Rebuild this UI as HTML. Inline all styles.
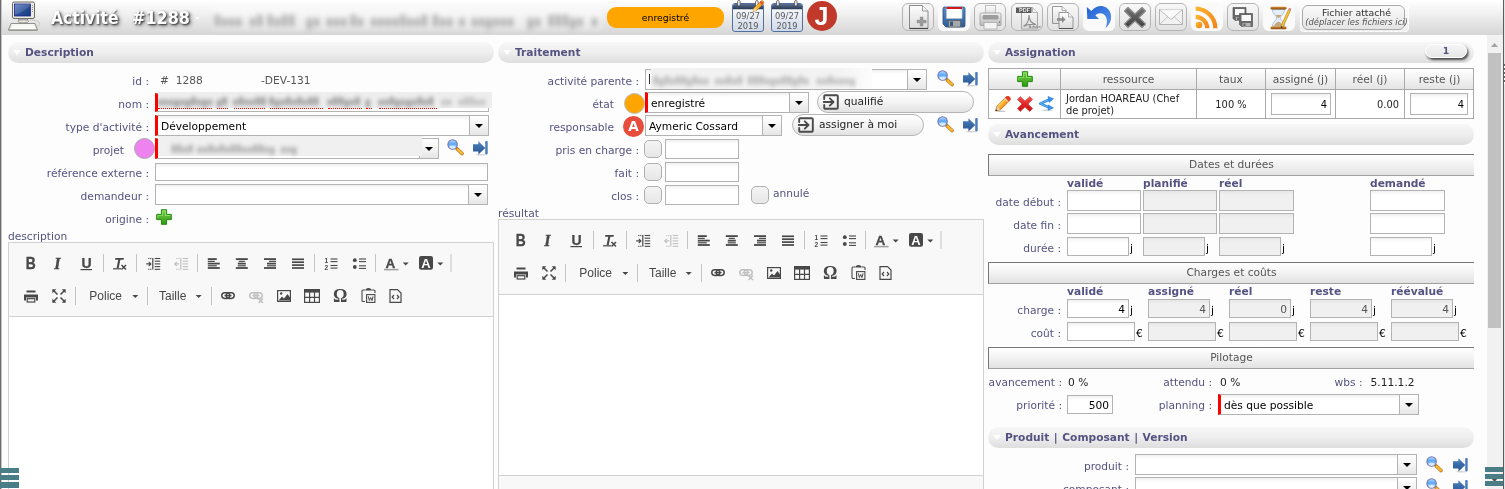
<!DOCTYPE html>
<html lang="fr"><head><meta charset="utf-8"><title>Activité #1288</title>
<style>
*{box-sizing:border-box;margin:0;padding:0}
html,body{width:1505px;height:489px;overflow:hidden;background:#fdfdfd}
body{position:relative;font-family:"DejaVu Sans","Liberation Sans",sans-serif;font-size:8pt;color:#000}
.a{position:absolute;white-space:nowrap}
.lbl{position:absolute;left:0;text-align:right;color:#545381;line-height:14px;height:14px;white-space:nowrap}
.txt{position:absolute;line-height:14px;height:14px;white-space:nowrap;color:#555}
.sec{position:absolute;height:21px;border-radius:10.5px;background:linear-gradient(#f7f7f7,#eeeeee 50%,#dedede);color:#545381;font-weight:bold;line-height:22px;padding-left:17px;white-space:nowrap;word-spacing:.8px}
.sec:before{content:"";position:absolute;left:4.5px;top:8px;border:4px solid transparent;border-top:5px solid #fff;border-bottom:0}
.inp{position:absolute;border:1px solid #b3b3b3;background:linear-gradient(#f0f0f0,#fff 4px,#fff);line-height:14px;white-space:nowrap;overflow:hidden;color:#000;padding:3px 3px 0 3px}
.inp.ro{background:linear-gradient(#e6e6e6,#f0f0f0 4px,#f0f0f0);color:#555}
.inp.r{text-align:right}
.inp.red{border-left:3px solid #f00}
.sel{position:absolute;border:1px solid #b3b3b3;background:linear-gradient(#f0f0f0,#fff 4px,#fff);line-height:14px;white-space:nowrap;overflow:hidden;color:#000;padding:4px 3px 0 3px}
.sel.red{border-left:3px solid #f00}
.sel i{position:absolute;right:0;top:0;bottom:0;width:19px;border-left:1px solid #b3b3b3;background:linear-gradient(#fff,#f4f4f4 50%,#e6e6e6)}
.sel i:after{content:"";position:absolute;left:5px;top:8px;border:4px solid transparent;border-top:4px solid #000;border-bottom:0}
.bar{position:absolute;height:22px;border:1px solid #a0a0a0;border-right:0;border-top-color:#777;border-left-color:#777;background:linear-gradient(#fff,#f2f2f2 50%,#e2e2e2);text-align:center;color:#555;line-height:20px}
.colh{position:absolute;color:#545381;font-weight:bold;line-height:14px;white-space:nowrap}
.chk{position:absolute;width:18px;height:18px;margin-left:-1px;border:1px solid #b0b0b0;border-radius:5px;background:linear-gradient(#f4f4f4,#e6e6e6)}
</style></head>
<body>
<div id="root" style="position:absolute;left:0;top:0;width:1505px;height:489px;will-change:transform">

<svg width="0" height="0" style="position:absolute">
<defs>
<linearGradient id="lens" x1="0" y1="0" x2="0" y2="1"><stop offset="0" stop-color="#b8dcff"/><stop offset="0.45" stop-color="#5aa6f6"/><stop offset="0.75" stop-color="#9ccefc"/><stop offset="1" stop-color="#e4f4ff"/></linearGradient>
<linearGradient id="gdoc" x1="0" y1="0" x2="0" y2="1"><stop offset="0" stop-color="#fdfdfd"/><stop offset="1" stop-color="#dcdcdc"/></linearGradient>
<linearGradient id="ggrey" x1="0" y1="0" x2="0" y2="1"><stop offset="0" stop-color="#f2f2f2"/><stop offset="1" stop-color="#b8b8b8"/></linearGradient>
<linearGradient id="gblue" x1="0" y1="0" x2="0" y2="1"><stop offset="0" stop-color="#5b8cc4"/><stop offset="1" stop-color="#2f5f98"/></linearGradient>
<linearGradient id="garrow" x1="0" y1="0" x2="0" y2="1"><stop offset="0" stop-color="#4a7fc0"/><stop offset="1" stop-color="#2a5590"/></linearGradient>
<linearGradient id="gundo" x1="0" y1="0" x2="1" y2="1"><stop offset="0" stop-color="#1f60d0"/><stop offset="1" stop-color="#5a96f0"/></linearGradient>
<linearGradient id="gplus" x1="0" y1="0" x2="0" y2="1"><stop offset="0" stop-color="#7ad04a"/><stop offset="1" stop-color="#2f9a12"/></linearGradient>
<linearGradient id="gcal" x1="0" y1="0" x2="0" y2="1"><stop offset="0" stop-color="#ffffff"/><stop offset="0.3" stop-color="#f0f3f8"/><stop offset="1" stop-color="#cfd8e8"/></linearGradient>
<linearGradient id="gcalh" x1="0" y1="0" x2="0" y2="1"><stop offset="0" stop-color="#5c6f92"/><stop offset="1" stop-color="#283650"/></linearGradient>
<linearGradient id="grss" x1="0" y1="0" x2="1" y2="1"><stop offset="0" stop-color="#fdb62f"/><stop offset="1" stop-color="#f2821a"/></linearGradient>
<linearGradient id="gscreen" x1="0" y1="0" x2="1" y2="1"><stop offset="0" stop-color="#5a7fc0"/><stop offset="0.5" stop-color="#2a4f98"/><stop offset="1" stop-color="#16397a"/></linearGradient>
<linearGradient id="gpen2" x1="0" y1="0" x2="0" y2="1"><stop offset="0" stop-color="#ffd866"/><stop offset="0.5" stop-color="#fbb030"/><stop offset="1" stop-color="#f08c18"/></linearGradient>
<linearGradient id="gpen" x1="0" y1="0" x2="1" y2="0"><stop offset="0" stop-color="#ffd24a"/><stop offset="1" stop-color="#f08a1a"/></linearGradient>
<linearGradient id="gred" x1="0" y1="0" x2="0" y2="1"><stop offset="0" stop-color="#f25a5a"/><stop offset="0.5" stop-color="#e02626"/><stop offset="1" stop-color="#c81616"/></linearGradient>
<linearGradient id="gx" x1="0" y1="0" x2="0" y2="1"><stop offset="0" stop-color="#777"/><stop offset="1" stop-color="#3e3e3e"/></linearGradient>
<linearGradient id="gwood" x1="0" y1="0" x2="0" y2="1"><stop offset="0" stop-color="#d98a2a"/><stop offset="1" stop-color="#8a4a10"/></linearGradient>
</defs></svg>

<div class="a" style="left:0px;top:0px;width:2px;height:489px;background:linear-gradient(90deg,#6c6c6c 50%,#c4c4c4 50%)"></div>
<div class="a" style="left:2px;top:0px;width:1501px;height:35px;background:linear-gradient(#ffffff,#f0f0f0 40%,#d6d6d6)"></div>
<div class="a" style="left:8px;top:0.5px;width:32px;height:32px;"><svg width="32" height="32" viewBox="0 0 32 32" style="display:block;"><path d="M22 19c5 0 9 1 9.500 3.500c.3 1.500-1 2.500-2.500 3" fill="none" stroke="#c0c0b0" stroke-width="0.8"/><rect x="4.500" y="1" width="22" height="16.500" rx="1.500" fill="#ecece4" stroke="#6a6a66" stroke-width="1"/><rect x="6.500" y="3" width="16" height="12" fill="url(#gscreen)" stroke="#23238e" stroke-width="0.8"/><path d="M7 13.500c6-1 11-5 15.500-9.500v-1h-15.500z" fill="#fff" opacity="0.150"/><circle cx="24.500" cy="4.500" r=".5" fill="#777"/><circle cx="24.500" cy="6.500" r=".5" fill="#777"/><circle cx="24.500" cy="8.500" r=".5" fill="#777"/><circle cx="24.500" cy="10.500" r=".5" fill="#777"/><path d="M10.500 17.500h9.500c0 2-2 3-4.700 3s-4.800-1-4.800-3z" fill="#c8c8c0" stroke="#6a6a66" stroke-width="0.8"/><ellipse cx="15.300" cy="20.300" rx="5.500" ry="1.600" fill="#e4e4dc" stroke="#7a7a76" stroke-width="0.7"/><path d="M3 22.500h24l2.500 6.500h-29z" fill="#ecece4" stroke="#7a7a76" stroke-width="0.8" stroke-linejoin="round"/><path d="M4.500 24h21.500M3.800 25.700h23M3 27.400h24.500" stroke="#fff" stroke-width="1.100"/><path d="M0.500 29.300h29" stroke="#8a8a84" stroke-width="0.800"/></svg></div>
<div class="a" style="left:51px;top:7px;width:70px;height:22px;font-family:'DejaVu Sans Condensed','DejaVu Sans',sans-serif;font-weight:bold;font-size:17.3px;color:#fff;text-shadow:1px 1px 2px rgba(0,0,0,.75),2px 2px 4px rgba(0,0,0,.45);line-height:22px">Activité</div>
<div class="a" style="left:132px;top:7px;width:62px;height:22px;font-family:'DejaVu Sans Condensed','DejaVu Sans',sans-serif;font-weight:bold;font-size:17.8px;color:#fff;text-shadow:1px 1px 2px rgba(0,0,0,.75),2px 2px 4px rgba(0,0,0,.45);line-height:22px">#1288</div>
<div class="a" style="left:196px;top:17px;width:3px;height:2px;background:#fff;opacity:.8"></div>
<div class="a" style="left:212px;top:7px;width:390px;height:23px;background:rgba(255,255,255,.38);filter:blur(2px)"></div>
<svg class="a" width="1000" height="170" style="left:0;top:0;filter:blur(2.7px);overflow:visible" fill="rgba(70,70,70,.36)"><rect x="214.6" y="14.5" width="5.2" height="12.0" rx="1"/><rect x="221.8" y="18.0" width="5.2" height="8.5" rx="1"/><rect x="229.0" y="18.0" width="5.2" height="8.5" rx="1"/><rect x="236.2" y="18.0" width="5.2" height="8.5" rx="1"/><rect x="250.0" y="18.0" width="5.2" height="8.5" rx="1"/><rect x="257.2" y="14.5" width="5.2" height="12.0" rx="1"/><rect x="267.6" y="14.5" width="5.2" height="12.0" rx="1"/><rect x="274.8" y="18.0" width="5.2" height="8.5" rx="1"/><rect x="282.0" y="14.5" width="5.2" height="12.0" rx="1"/><rect x="289.2" y="14.5" width="5.2" height="12.0" rx="1"/><rect x="306.7" y="18.0" width="5.2" height="11.3" rx="1"/><rect x="313.9" y="18.0" width="5.2" height="8.5" rx="1"/><rect x="326.8" y="18.0" width="5.2" height="8.5" rx="1"/><rect x="334.0" y="18.0" width="5.2" height="8.5" rx="1"/><rect x="341.2" y="18.0" width="5.2" height="8.5" rx="1"/><rect x="350.5" y="14.5" width="5.2" height="12.0" rx="1"/><rect x="357.7" y="18.0" width="5.2" height="8.5" rx="1"/><rect x="371.4" y="18.0" width="5.2" height="8.5" rx="1"/><rect x="378.6" y="18.0" width="5.2" height="8.5" rx="1"/><rect x="385.8" y="18.0" width="5.2" height="8.5" rx="1"/><rect x="393.0" y="18.0" width="5.2" height="8.5" rx="1"/><rect x="400.2" y="14.5" width="5.2" height="12.0" rx="1"/><rect x="407.4" y="18.0" width="5.2" height="8.5" rx="1"/><rect x="414.6" y="18.0" width="5.2" height="8.5" rx="1"/><rect x="421.8" y="14.5" width="5.2" height="12.0" rx="1"/><rect x="432.8" y="14.5" width="5.2" height="12.0" rx="1"/><rect x="440.0" y="18.0" width="5.2" height="8.5" rx="1"/><rect x="447.2" y="18.0" width="5.2" height="8.5" rx="1"/><rect x="459.3" y="18.0" width="5.2" height="8.5" rx="1"/><rect x="471.9" y="18.0" width="5.2" height="8.5" rx="1"/><rect x="479.1" y="18.0" width="5.2" height="8.5" rx="1"/><rect x="486.3" y="18.0" width="5.2" height="11.3" rx="1"/><rect x="493.5" y="18.0" width="5.2" height="8.5" rx="1"/><rect x="500.7" y="18.0" width="5.2" height="8.5" rx="1"/><rect x="507.9" y="18.0" width="5.2" height="8.5" rx="1"/><rect x="527.7" y="18.0" width="5.2" height="11.3" rx="1"/><rect x="534.9" y="18.0" width="5.2" height="8.5" rx="1"/><rect x="548.6" y="14.5" width="5.2" height="12.0" rx="1"/><rect x="555.8" y="14.5" width="5.2" height="12.0" rx="1"/><rect x="563.0" y="14.5" width="5.2" height="12.0" rx="1"/><rect x="570.2" y="18.0" width="5.2" height="11.3" rx="1"/><rect x="577.4" y="18.0" width="5.2" height="8.5" rx="1"/><rect x="591.9" y="18.0" width="5.2" height="8.5" rx="1"/></svg>
<div class="a" style="left:607px;top:7px;width:117px;height:21px;background:#ffa500;border-radius:9px;text-align:center;font-size:7pt;line-height:21px;color:#000">enregistré</div>
<div class="a" style="left:732px;top:0px;width:33px;height:33px;"><svg width="33" height="33" viewBox="0 0 33 33" style="display:block;overflow:visible"><rect x="0.500" y="3.500" width="31" height="28" rx="2.500" fill="url(#gcal)" stroke="#52709e" stroke-width="1"/><path d="M1 9.300v-3.300a2 2 0 0 1 2-2h26a2 2 0 0 1 2 2v3.300z" fill="url(#gcalh)"/><rect x="5.600" y="0.500" width="2.500" height="5.500" rx="1.250" fill="#f8f8f8" stroke="#333" stroke-width="0.700"/><rect x="23.600" y="0.500" width="2.500" height="5.500" rx="1.250" fill="#f8f8f8" stroke="#333" stroke-width="0.700"/><text x="16" y="19.200" text-anchor="middle" font-family="DejaVu Sans,Liberation Sans,sans-serif" font-size="8.300" fill="#585858">09/27</text><text x="16" y="29.200" text-anchor="middle" font-family="DejaVu Sans,Liberation Sans,sans-serif" font-size="8.300" fill="#585858">2019</text><path d="M21 11.500l1-3.500 7-7a1.400 1.400 0 0 1 2 0l.5.500a1.400 1.400 0 0 1 0 2l-7 7z" fill="url(#gpen)" stroke="#c07a10" stroke-width="0.600"/><path d="M21 11.500l1-3.500 2.500 2.500z" fill="#f4d8a8"/><path d="M28.300 1.700l2.500 2.500" stroke="#e8483a" stroke-width="1.800"/></svg></div>
<div class="a" style="left:771px;top:0px;width:33px;height:33px;"><svg width="33" height="33" viewBox="0 0 33 33" style="display:block;overflow:visible"><rect x="0.500" y="3.500" width="31" height="28" rx="2.500" fill="url(#gcal)" stroke="#52709e" stroke-width="1"/><path d="M1 9.300v-3.300a2 2 0 0 1 2-2h26a2 2 0 0 1 2 2v3.300z" fill="url(#gcalh)"/><rect x="5.600" y="0.500" width="2.500" height="5.500" rx="1.250" fill="#f8f8f8" stroke="#333" stroke-width="0.700"/><rect x="23.600" y="0.500" width="2.500" height="5.500" rx="1.250" fill="#f8f8f8" stroke="#333" stroke-width="0.700"/><text x="16" y="19.200" text-anchor="middle" font-family="DejaVu Sans,Liberation Sans,sans-serif" font-size="8.300" fill="#585858">09/27</text><text x="16" y="29.200" text-anchor="middle" font-family="DejaVu Sans,Liberation Sans,sans-serif" font-size="8.300" fill="#585858">2019</text></svg></div>
<div class="a" style="left:807px;top:1px;width:30px;height:30px;background:#c0392b;border-radius:15px;color:#fff;font-weight:bold;font-size:25px;line-height:31px;text-align:center;font-family:'Liberation Sans',sans-serif;padding-right:1px">J</div>
<div class="a" style="left:902px;top:3px;width:32px;height:28px;background:linear-gradient(#f8f8f8,#e2e2e2);border:1px solid #b4b4b4;border-radius:6px"><div style="position:absolute;left:-1px;top:-1px"><svg width="32" height="28" viewBox="0 0 32 28" style="display:block;"><path d="M7.5 2.5h13l5.500 5.500v17.5h-18.5z" fill="url(#gdoc)" stroke="#8a8a8a" stroke-width="1"/><path d="M20.500 2.500v5.500h5.500" fill="#f6f6f6" stroke="#9a9a9a" stroke-width="1"/><path d="M7.500 25.500h18.500" stroke="#444" stroke-width="1.2"/><path d="M18.300 14h2.600v3.200h3.200v2.600h-3.200v3.200h-2.600v-3.200h-3.200v-2.600h3.200z" fill="#9a9a9a" stroke="#7c7c7c" stroke-width="0.5"/></svg></div></div>
<div class="a" style="left:938px;top:3px;width:32px;height:28px;background:#fafafa;border-radius:6px"><div style="position:absolute;left:0px;top:0px"><svg width="32" height="28" viewBox="0 0 32 28" style="display:block;"><path d="M5 5.500a1.500 1.500 0 0 1 1.500-1.500h19a1.500 1.500 0 0 1 1.500 1.500v17a1.500 1.500 0 0 1-1.500 1.500h-17.500l-3-3z" fill="url(#gblue)" stroke="#2b4f80" stroke-width="0.8"/><rect x="8.500" y="4.500" width="15.500" height="11" fill="#fff" stroke="#b8c4d8" stroke-width="0.6"/><rect x="8.500" y="4" width="15.500" height="2" fill="#d01818"/><rect x="10.500" y="17.500" width="12" height="6.500" fill="#a8a8a8" stroke="#555" stroke-width="0.6"/><rect x="12" y="18.500" width="3" height="4.500" fill="#3a5a88"/></svg></div></div>
<div class="a" style="left:974px;top:3px;width:32px;height:28px;background:linear-gradient(#f8f8f8,#e2e2e2);border:1px solid #b4b4b4;border-radius:6px"><div style="position:absolute;left:-1px;top:-1px"><svg width="32" height="28" viewBox="0 0 32 28" style="display:block;"><rect x="11.500" y="2.500" width="10" height="9" fill="url(#gdoc)" stroke="#b0b0b0" stroke-width="0.8"/><path d="M6 11.500a1.500 1.500 0 0 1 1.500-1.500h18a1.500 1.500 0 0 1 1.500 1.500v10a1 1 0 0 1-1 1h-19a1 1 0 0 1-1-1z" fill="url(#ggrey)" stroke="#9a9a9a" stroke-width="0.8"/><rect x="8.500" y="12" width="16" height="4.500" rx="1.500" fill="#9c9c9c"/><rect x="10" y="19.500" width="13" height="6.500" fill="#f4f4f4" stroke="#aaa" stroke-width="0.8"/><rect x="25" y="18.500" width="1" height="1" fill="#555"/></svg></div></div>
<div class="a" style="left:1011px;top:3px;width:32px;height:28px;background:linear-gradient(#f8f8f8,#e2e2e2);border:1px solid #b4b4b4;border-radius:6px"><div style="position:absolute;left:-1px;top:-1px"><svg width="32" height="28" viewBox="0 0 32 28" style="display:block;"><path d="M10.500 4.500h11l5 5v16.500h-16z" fill="url(#gdoc)" stroke="#a0a0a0" stroke-width="0.9"/><path d="M21.500 4.500v5h5" fill="#f0f0f0" stroke="#a8a8a8" stroke-width="0.8"/><rect x="5" y="4.500" width="15.500" height="5.500" fill="#5a5a5a"/><text x="8" y="9.300" font-family="Liberation Sans,sans-serif" font-size="5.500" font-weight="bold" fill="#e8e8e8">PDF</text><path d="M12.500 23.500c3.500-2 5.500-6 5.500-11.500c0 5 2.500 8.500 7 9.500c-4.500-.5-9 0-12.500 2z" fill="none" stroke="#8a8a8a" stroke-width="1.100"/><text x="17.500" y="25" font-family="Liberation Sans,sans-serif" font-size="4" font-weight="bold" fill="#8a8a8a">Adobe</text></svg></div></div>
<div class="a" style="left:1047px;top:3px;width:32px;height:28px;background:linear-gradient(#f8f8f8,#e2e2e2);border:1px solid #b4b4b4;border-radius:6px"><div style="position:absolute;left:-1px;top:-1px"><svg width="32" height="28" viewBox="0 0 32 28" style="display:block;"><path d="M5.500 3.500h9.500l4 4v13h-13.500z" fill="url(#gdoc)" stroke="#8c8c8c" stroke-width="0.9"/><path d="M15 3.500v4h4" fill="#f4f4f4" stroke="#9a9a9a" stroke-width="0.8"/><path d="M12 9.500h9.500l4.500 4.500v11.500h-14z" fill="url(#gdoc)" stroke="#8c8c8c" stroke-width="0.9"/><path d="M21.500 9.500v4.500h4.500" fill="#f4f4f4" stroke="#9a9a9a" stroke-width="0.8"/><path d="M12 25.500h14" stroke="#555" stroke-width="1"/><path d="M10 15.300h5v-2.300l3.600 3.500-3.600 3.500v-2.300h-5z" fill="#8a8a8a"/></svg></div></div>
<div class="a" style="left:1083px;top:3px;width:32px;height:28px;background:#fafafa;border-radius:6px"><div style="position:absolute;left:0px;top:0px"><svg width="32" height="28" viewBox="0 0 32 28" style="display:block;"><path d="M3.800 3.900L4.300 16.100L16 16.100L12.300 12.200C15 9.800 19.500 9.300 22 12.500C24.600 16 24.500 20.500 22.400 25.200C27.200 21.500 29.700 15 27 9C24 2.500 15 0.300 8.300 7.900Z" fill="url(#gundo)"/></svg></div></div>
<div class="a" style="left:1119px;top:3px;width:32px;height:28px;background:linear-gradient(#f8f8f8,#e2e2e2);border:1px solid #b4b4b4;border-radius:6px"><div style="position:absolute;left:-1px;top:-1px"><svg width="32" height="28" viewBox="0 0 32 28" style="display:block;"><path d="M9 4.500l7 6.500 7-6.500 3.500 3.500-6.500 6.500 6.500 6.500-3.500 3.500-7-6.500-7 6.500-3.500-3.500 6.500-6.500-6.500-6.500z" fill="url(#gx)" stroke="#8c8c8c" stroke-width="1.200" stroke-linejoin="round"/></svg></div></div>
<div class="a" style="left:1155px;top:3px;width:32px;height:28px;background:linear-gradient(#f8f8f8,#e2e2e2);border:1px solid #b4b4b4;border-radius:6px"><div style="position:absolute;left:-1px;top:-1px"><svg width="32" height="28" viewBox="0 0 32 28" style="display:block;"><rect x="4.500" y="6.500" width="23" height="15" fill="#f2f2f2" stroke="#b4b4b4" stroke-width="1"/><path d="M4.500 21.500l8.500-8M27.500 21.500l-8.500-8" stroke="#c4c4c4" stroke-width="1" fill="none"/><path d="M4.500 6.500l11.500 10 11.500-10" fill="#fafafa" stroke="#bcbcbc" stroke-width="1"/></svg></div></div>
<div class="a" style="left:1191px;top:3px;width:32px;height:28px;background:#fafafa;border-radius:6px"><div style="position:absolute;left:0px;top:0px"><svg width="32" height="28" viewBox="0 0 32 28" style="display:block;"><circle cx="8" cy="22" r="3.300" fill="url(#grss)"/><path d="M4.700 11.700v4.200a9.400 9.400 0 0 1 9.400 9.400h4.200a13.600 13.600 0 0 0-13.600-13.600z" fill="url(#grss)"/><path d="M4.700 3.500v4.300a17.500 17.500 0 0 1 17.500 17.500h4.300a21.800 21.800 0 0 0-21.800-21.800z" fill="url(#grss)"/></svg></div></div>
<div class="a" style="left:1227px;top:3px;width:32px;height:28px;background:linear-gradient(#f8f8f8,#e2e2e2);border:1px solid #b4b4b4;border-radius:6px"><div style="position:absolute;left:-1px;top:-1px"><svg width="32" height="28" viewBox="0 0 32 28" style="display:block;"><g transform="translate(6,4.5)"><path d="M0 0h13v13h-11l-2-2z" fill="#6a6a6a" stroke="#4a4a4a" stroke-width="0.6"/><rect x="2" y="1.500" width="9.500" height="6" fill="#fafafa"/><rect x="3" y="9.500" width="8" height="3.500" fill="#b4b4b4"/><rect x="4" y="10" width="2" height="2.500" fill="#666"/></g><g transform="translate(12.5,10.5)"><path d="M0 0h13v13h-11l-2-2z" fill="#6a6a6a" stroke="#4a4a4a" stroke-width="0.6"/><rect x="2" y="1.500" width="9.500" height="6" fill="#fafafa"/><rect x="3" y="9.500" width="8" height="3.500" fill="#b4b4b4"/><rect x="4" y="10" width="2" height="2.500" fill="#666"/></g></svg></div></div>
<div class="a" style="left:1263px;top:3px;width:32px;height:28px;background:#fafafa;border-radius:6px"><div style="position:absolute;left:0px;top:0px"><svg width="32" height="28" viewBox="0 0 32 28" style="display:block;"><path d="M9.500 6.500c0 5 4.200 6 4.200 8.500c0 2.500-4.200 3.500-4.200 8.500h12c0-5-4.200-6-4.200-8.500c0-2.500 4.200-3.500 4.200-8.500z" fill="#e4eef8" stroke="#9ab4d0" stroke-width="0.8"/><path d="M12.500 12h6c-1 1.500-2.300 2-2.300 3h-1.400c0-1-1.300-1.500-2.300-3z M11 23c.5-2.500 3-3.500 4.500-4.500c1.500 1 4 2 4.500 4.500z" fill="#c8a878"/><rect x="7.500" y="3.800" width="16" height="2.700" rx="1.200" fill="url(#gwood)"/><rect x="7.500" y="23.500" width="16" height="2.700" rx="1.200" fill="url(#gwood)"/><path d="M25.500 6.500l2 1-7.500 16.500-2.200 1.500 .2-2.500z" fill="#f6c83a" stroke="#a8780a" stroke-width="0.6"/><path d="M25.500 6.500l2 1 .8-1.800-2-1z" fill="#e87a8a"/><path d="M17.800 25.500l.2-2.500 2 1z" fill="#333"/></svg></div></div>
<div class="a" style="left:1300px;top:3.5px;width:109px;height:28px;border:1px dashed #fff;border-radius:4px;background:rgba(255,255,255,.55)"></div>
<div class="a" style="left:1302px;top:5px;width:103px;height:25px;border:1px solid #aaa;border-radius:6px;background:linear-gradient(#fafafa,#e4e4e4)"></div>
<div class="a" style="left:1305px;top:8px;width:103px;height:10px;text-align:center;font-size:7pt;line-height:10px;color:#333">Fichier attaché</div>
<div class="a" style="left:1305px;top:17px;width:103px;height:10px;text-align:center;font-size:8.4px;line-height:10px;color:#555;font-style:italic">(déplacer les fichiers ici)</div>
<div class="sec" style="left:8px;top:42px;width:486px">Description</div>
<div class="sec" style="left:498px;top:42px;width:486px">Traitement</div>
<div class="sec" style="left:988px;top:42px;width:486px">Assignation</div>
<div class="sec" style="left:988px;top:124px;width:486px">Avancement</div>
<div class="sec" style="left:988px;top:427px;width:486px">Produit | Composant | Version</div>
<div class="lbl" style="width:149px;top:75px">id :</div>
<div class="txt" style="left:160px;top:74px;">#&nbsp;&nbsp;1288</div>
<div class="txt" style="left:261px;top:74px;">-DEV-131</div>
<div class="lbl" style="width:149px;top:98px">nom :</div>
<div class="inp red" style="left:155px;top:93px;width:334px;height:19px;"></div>
<div class="a" style="left:158px;top:91.5px;width:334px;height:16px;background:#eeeeee;filter:blur(.7px)"></div>
<svg class="a" width="1000" height="170" style="left:0;top:0;filter:blur(2.1px);overflow:visible" fill="rgba(70,70,70,.62)"><rect x="158.0" y="99.5" width="3.4" height="6.0" rx="1"/><rect x="163.6" y="99.5" width="3.4" height="6.0" rx="1"/><rect x="169.2" y="99.5" width="3.4" height="6.0" rx="1"/><rect x="174.8" y="99.5" width="3.4" height="8.0" rx="1"/><rect x="180.4" y="99.5" width="3.4" height="6.0" rx="1"/><rect x="186.0" y="99.5" width="3.4" height="8.0" rx="1"/><rect x="191.6" y="97.0" width="3.4" height="8.5" rx="1"/><rect x="197.2" y="99.5" width="3.4" height="6.0" rx="1"/><rect x="202.8" y="99.5" width="3.4" height="8.0" rx="1"/><rect x="208.4" y="99.5" width="3.4" height="6.0" rx="1"/><rect x="217.4" y="99.5" width="3.4" height="8.0" rx="1"/><rect x="223.0" y="97.0" width="3.4" height="8.5" rx="1"/><rect x="233.7" y="99.5" width="3.4" height="6.0" rx="1"/><rect x="239.3" y="97.0" width="3.4" height="8.5" rx="1"/><rect x="244.9" y="99.5" width="3.4" height="6.0" rx="1"/><rect x="250.5" y="99.5" width="3.4" height="6.0" rx="1"/><rect x="256.1" y="97.0" width="3.4" height="8.5" rx="1"/><rect x="261.7" y="97.0" width="3.4" height="8.5" rx="1"/><rect x="269.8" y="97.0" width="3.4" height="8.5" rx="1"/><rect x="275.4" y="99.5" width="3.4" height="8.0" rx="1"/><rect x="281.0" y="99.5" width="3.4" height="6.0" rx="1"/><rect x="286.6" y="97.0" width="3.4" height="8.5" rx="1"/><rect x="292.2" y="99.5" width="3.4" height="6.0" rx="1"/><rect x="297.8" y="97.0" width="3.4" height="8.5" rx="1"/><rect x="303.4" y="99.5" width="3.4" height="6.0" rx="1"/><rect x="309.0" y="97.0" width="3.4" height="8.5" rx="1"/><rect x="314.6" y="97.0" width="3.4" height="8.5" rx="1"/><rect x="328.0" y="99.5" width="3.4" height="6.0" rx="1"/><rect x="333.6" y="97.0" width="3.4" height="8.5" rx="1"/><rect x="339.2" y="97.0" width="3.4" height="8.5" rx="1"/><rect x="344.8" y="99.5" width="3.4" height="8.0" rx="1"/><rect x="350.4" y="99.5" width="3.4" height="6.0" rx="1"/><rect x="356.0" y="97.0" width="3.4" height="8.5" rx="1"/><rect x="366.0" y="99.5" width="3.4" height="8.0" rx="1"/><rect x="379.0" y="99.5" width="3.4" height="6.0" rx="1"/><rect x="384.6" y="99.5" width="3.4" height="6.0" rx="1"/><rect x="390.2" y="97.0" width="3.4" height="8.5" rx="1"/><rect x="395.8" y="99.5" width="3.4" height="8.0" rx="1"/><rect x="401.4" y="99.5" width="3.4" height="6.0" rx="1"/><rect x="407.0" y="99.5" width="3.4" height="8.0" rx="1"/><rect x="412.6" y="99.5" width="3.4" height="6.0" rx="1"/><rect x="418.2" y="97.0" width="3.4" height="8.5" rx="1"/><rect x="423.8" y="99.5" width="3.4" height="6.0" rx="1"/><rect x="429.4" y="97.0" width="3.4" height="8.5" rx="1"/></svg>
<svg class="a" width="1000" height="170" style="left:0;top:0;filter:blur(2.1px);overflow:visible" fill="rgba(70,70,70,.36)"><rect x="441.9" y="99.5" width="3.4" height="6.0" rx="1"/><rect x="447.5" y="99.5" width="3.4" height="6.0" rx="1"/><rect x="459.0" y="99.5" width="3.4" height="6.0" rx="1"/><rect x="464.6" y="97.0" width="3.4" height="8.5" rx="1"/><rect x="470.2" y="97.0" width="3.4" height="8.5" rx="1"/><rect x="475.8" y="99.5" width="3.4" height="6.0" rx="1"/><rect x="481.4" y="99.5" width="3.4" height="6.0" rx="1"/></svg>
<div class="a" style="left:158px;top:107.6px;width:53.6px;height:0px;border-top:1.5px dotted #f00"></div>
<div class="a" style="left:217.4px;top:107.6px;width:10.6px;height:0px;border-top:1.5px dotted #f00"></div>
<div class="a" style="left:233.7px;top:107.6px;width:31.3px;height:0px;border-top:1.5px dotted #f00"></div>
<div class="a" style="left:269.8px;top:107.6px;width:53.2px;height:0px;border-top:1.5px dotted #f00"></div>
<div class="a" style="left:328px;top:107.6px;width:33.6px;height:0px;border-top:1.5px dotted #f00"></div>
<div class="a" style="left:366px;top:107.6px;width:6px;height:0px;border-top:1.5px dotted #f00"></div>
<div class="a" style="left:379px;top:107.6px;width:58px;height:0px;border-top:1.5px dotted #f00"></div>
<div class="lbl" style="width:149px;top:121px">type d'activité :</div>
<div class="sel red" style="left:155px;top:115px;width:334px;height:21px;">Développement<i></i></div>
<div class="lbl" style="width:124px;top:144px">projet</div>
<div class="a" style="left:134px;top:138px;width:21px;height:21px;background:#ee82ee;border:1px solid #aaa;border-radius:50%"></div>
<div class="sel red" style="left:155px;top:138px;width:284px;height:21px;"><i></i></div>
<div class="a" style="left:158px;top:135.5px;width:264px;height:20px;background:#f0f0f0;filter:blur(.7px)"></div>
<svg class="a" width="1000" height="170" style="left:0;top:0;filter:blur(2.1px);overflow:visible" fill="rgba(80,80,80,.5)"><rect x="172.0" y="144.5" width="3.4" height="8.5" rx="1"/><rect x="177.6" y="144.5" width="3.4" height="8.5" rx="1"/><rect x="183.2" y="147.0" width="3.4" height="6.0" rx="1"/><rect x="188.8" y="144.5" width="3.4" height="8.5" rx="1"/><rect x="197.7" y="147.0" width="3.4" height="6.0" rx="1"/><rect x="203.3" y="147.0" width="3.4" height="6.0" rx="1"/><rect x="208.9" y="144.5" width="3.4" height="8.5" rx="1"/><rect x="214.5" y="147.0" width="3.4" height="6.0" rx="1"/><rect x="220.1" y="144.5" width="3.4" height="8.5" rx="1"/><rect x="225.7" y="147.0" width="3.4" height="6.0" rx="1"/><rect x="231.3" y="144.5" width="3.4" height="8.5" rx="1"/><rect x="236.9" y="144.5" width="3.4" height="8.5" rx="1"/><rect x="242.5" y="147.0" width="3.4" height="6.0" rx="1"/><rect x="248.1" y="147.0" width="3.4" height="6.0" rx="1"/><rect x="253.7" y="144.5" width="3.4" height="8.5" rx="1"/><rect x="259.3" y="144.5" width="3.4" height="8.5" rx="1"/><rect x="264.9" y="147.0" width="3.4" height="6.0" rx="1"/><rect x="270.5" y="147.0" width="3.4" height="8.0" rx="1"/><rect x="281.4" y="147.0" width="3.4" height="6.0" rx="1"/><rect x="287.0" y="147.0" width="3.4" height="6.0" rx="1"/><rect x="292.6" y="147.0" width="3.4" height="8.0" rx="1"/></svg>
<div class="a" style="left:447px;top:139px;width:18px;height:18px;"><svg width="18" height="18" viewBox="0 0 18 18" style="display:block;"><line x1="10.200" y1="10" x2="15" y2="14.500" stroke="#b87818" stroke-width="3.700" stroke-linecap="round"/><line x1="10.600" y1="10.400" x2="14.900" y2="14.400" stroke="#f8b838" stroke-width="2.200" stroke-linecap="round"/><circle cx="5.600" cy="5.500" r="4.700" fill="url(#lens)" stroke="#7478ac" stroke-width="1.100"/><ellipse cx="5.600" cy="8" rx="3" ry="1.500" fill="#fff" opacity="0.550"/></svg></div>
<div class="a" style="left:473px;top:140px;width:16px;height:16px;"><svg width="16" height="16" viewBox="0 0 16 16" style="display:block;"><ellipse cx="8" cy="14.700" rx="5" ry="0.700" fill="#888" opacity="0.350"/><path d="M0 4.300h5.400V1.300l6.900 6.600-6.900 6.500V11.500H0z" fill="url(#garrow)"/><rect x="12.200" y="1.100" width="2.500" height="13.300" rx="0.800" fill="#4a7cba"/></svg></div>
<div class="lbl" style="width:149px;top:167px">référence externe :</div>
<div class="inp " style="left:155px;top:163px;width:333px;height:18px;"></div>
<div class="lbl" style="width:149px;top:190px">demandeur :</div>
<div class="sel " style="left:155px;top:184px;width:333px;height:21px;"><i></i></div>
<div class="lbl" style="width:149px;top:213px">origine :</div>
<div class="a" style="left:156px;top:209px;width:16px;height:16px;"><svg width="16" height="16" viewBox="0 0 16 16" style="display:block;"><path d="M5.400 0.700h5.200v4.700h4.700v5.200h-4.700v4.700H5.400v-4.700H0.700V5.400h4.700z" fill="url(#gplus)" stroke="#1f8a0c" stroke-width="1" stroke-linejoin="round"/><path d="M6.500 1.800h3v4.700h4.700" fill="none" stroke="#a8ec80" stroke-width="0.900" opacity="0.750"/><path d="M1.800 9.300V6.500h4.700V1.800" fill="none" stroke="#a8ec80" stroke-width="0.900" opacity="0.600"/></svg></div>
<div class="lbl" style="left:8px;top:230px;text-align:left">description</div>
<div class="a" style="left:8px;top:242px;width:486px;height:260px;border:1px solid #d1d1d1;background:#fff"></div>
<div class="a" style="left:9px;top:243px;width:484px;height:74px;background:#f8f8f8;border-bottom:1px solid #d1d1d1"><div style="position:absolute;left:0;top:0;width:470px;height:72px"><svg width="470" height="72" viewBox="0 0 470 72" style="display:block;position:absolute;left:-1px;top:0"><text transform="translate(17.700,25.800) scale(0.880,1)" font-family="Liberation Sans,sans-serif" font-size="15.700" font-weight="bold" fill="#484848" stroke="#484848" stroke-width="0.350">B</text><text x="46.300" y="25.900" font-family="Liberation Serif,serif" font-size="16" font-weight="bold" font-style="italic" fill="#484848" stroke="#484848" stroke-width="0.350">I</text><text x="73.400" y="24.800" font-family="Liberation Sans,sans-serif" font-size="14" font-weight="bold" fill="#484848" stroke="#484848" stroke-width="0.250">U</text><rect x="72.5" y="26.00" width="11.5" height="1.2" fill="#484848"/><rect x="95.0" y="11" width="1" height="18" fill="#c4c4c4"/><text x="106" y="25" font-family="Liberation Sans,sans-serif" font-size="14.5" font-weight="bold" font-style="italic" fill="#484848">T</text><rect x="105" y="25.20" width="8" height="1.2" fill="#484848"/><path d="M113.5 22l4.500 4.500M118 22l-4.500 4.500" stroke="#484848" stroke-width="1.500" fill="none"/><rect x="128.0" y="11" width="1" height="18" fill="#c4c4c4"/><rect x="144.2" y="15" width="1.2" height="11.500" fill="#484848"/><rect x="146.7" y="14.95" width="5.5" height="1.1" fill="#484848"/><rect x="146.7" y="17.65" width="5.5" height="1.1" fill="#484848"/><rect x="146.7" y="20.35" width="5.5" height="1.1" fill="#484848"/><rect x="146.7" y="23.05" width="5.5" height="1.1" fill="#484848"/><rect x="146.7" y="25.75" width="5.5" height="1.1" fill="#484848"/><rect x="140.2" y="14.95" width="1.2" height="1.1" fill="#484848"/><rect x="142.2" y="14.95" width="1.2" height="1.1" fill="#484848"/><rect x="140.2" y="25.75" width="1.2" height="1.1" fill="#484848"/><rect x="142.2" y="25.75" width="1.2" height="1.1" fill="#484848"/><path d="M138.2 20.900h4.500M140.79999999999998 18.800l2.100 2.100-2.100 2.100" stroke="#484848" stroke-width="1.1" fill="none"/><rect x="172.2" y="15" width="1.2" height="11.500" fill="#c0c0c0"/><rect x="174.7" y="14.95" width="5.5" height="1.1" fill="#c0c0c0"/><rect x="174.7" y="17.65" width="5.5" height="1.1" fill="#c0c0c0"/><rect x="174.7" y="20.35" width="5.5" height="1.1" fill="#c0c0c0"/><rect x="174.7" y="23.05" width="5.5" height="1.1" fill="#c0c0c0"/><rect x="174.7" y="25.75" width="5.5" height="1.1" fill="#c0c0c0"/><rect x="168.2" y="14.95" width="1.2" height="1.1" fill="#c0c0c0"/><rect x="170.2" y="14.95" width="1.2" height="1.1" fill="#c0c0c0"/><rect x="168.2" y="25.75" width="1.2" height="1.1" fill="#c0c0c0"/><rect x="170.2" y="25.75" width="1.2" height="1.1" fill="#c0c0c0"/><path d="M166.7 20.900h4.500M168.79999999999998 18.800l-2.100 2.100 2.100 2.100" stroke="#c0c0c0" stroke-width="1.1" fill="none"/><rect x="189.0" y="11" width="1" height="18" fill="#c4c4c4"/><rect x="199.8" y="15.20" width="9" height="1.8" fill="#484848"/><rect x="199.8" y="19.70" width="12" height="1.8" fill="#484848"/><rect x="199.8" y="24.10" width="12" height="1.8" fill="#484848"/><rect x="199.8" y="17.75" width="7" height="1.2" fill="#484848"/><rect x="199.8" y="22.20" width="9" height="1.2" fill="#484848"/><rect x="227.8" y="15.20" width="12" height="1.8" fill="#484848"/><rect x="229.8" y="19.70" width="8" height="1.8" fill="#484848"/><rect x="227.8" y="24.10" width="12" height="1.8" fill="#484848"/><rect x="230.8" y="17.75" width="6" height="1.2" fill="#484848"/><rect x="229.8" y="22.20" width="8" height="1.2" fill="#484848"/><rect x="256" y="15.20" width="12" height="1.8" fill="#484848"/><rect x="259" y="19.70" width="9" height="1.8" fill="#484848"/><rect x="256" y="24.10" width="12" height="1.8" fill="#484848"/><rect x="261" y="17.75" width="7" height="1.2" fill="#484848"/><rect x="259" y="22.20" width="9" height="1.2" fill="#484848"/><rect x="284" y="15.45" width="12" height="1.7" fill="#484848"/><rect x="284" y="18.35" width="12" height="1.7" fill="#484848"/><rect x="284" y="21.25" width="12" height="1.7" fill="#484848"/><rect x="284" y="24.15" width="12" height="1.7" fill="#484848"/><rect x="306.0" y="11" width="1" height="18" fill="#c4c4c4"/><text x="316.5" y="19.5" font-family="Liberation Sans,sans-serif" font-size="6.5" font-weight="bold" fill="#484848">1</text><text x="316.5" y="27" font-family="Liberation Sans,sans-serif" font-size="6.5" font-weight="bold" fill="#484848">2</text><rect x="322.5" y="15.45" width="7" height="1.1" fill="#484848"/><rect x="322.5" y="18.05" width="7" height="1.1" fill="#484848"/><rect x="322.5" y="21.95" width="7" height="1.1" fill="#484848"/><rect x="322.5" y="24.55" width="7" height="1.1" fill="#484848"/><circle cx="346.8" cy="17.2" r="1.9" fill="#484848"/><circle cx="346.8" cy="24" r="1.9" fill="#484848"/><rect x="351" y="15.45" width="7" height="1.1" fill="#484848"/><rect x="351" y="18.05" width="7" height="1.1" fill="#484848"/><rect x="351" y="22.25" width="7" height="1.1" fill="#484848"/><rect x="351" y="24.85" width="7" height="1.1" fill="#484848"/><rect x="367.0" y="11" width="1" height="18" fill="#c4c4c4"/><text x="377.600" y="24.500" font-family="Liberation Sans,sans-serif" font-size="13.500" font-weight="bold" fill="#484848" stroke="#484848" stroke-width="0.300">A</text><rect x="376" y="25.85" width="14.5" height="1.5" fill="#a0a0a0"/><path d="M394.7 19.5h6l-3 3z" fill="#484848"/><rect x="411" y="13" width="14" height="13.800" rx="2.200" fill="#484848"/><text x="413.2" y="24.800" font-family="Liberation Sans,sans-serif" font-size="13" font-weight="bold" fill="#fff">A</text><path d="M429.3 19.5h6l-3 3z" fill="#484848"/><rect x="442.5" y="11" width="1" height="18" fill="#c4c4c4"/><rect x="18.500" y="47.500" width="9" height="2" fill="#484848"/><path d="M16 51.500h14v6h-2v-3h-10v3h-2z" fill="#484848"/><rect x="19.200" y="55.700" width="7.600" height="3.300" fill="none" stroke="#484848" stroke-width="1.200"/><path d="M49.5 51.5L45.5 47.5" stroke="#484848" stroke-width="1.600"/><path d="M44.3 46.3L48.3 46.3L44.3 50.3z" fill="#484848"/><path d="M52.5 51.5L56.5 47.5" stroke="#484848" stroke-width="1.600"/><path d="M57.7 46.3L53.7 46.3L57.7 50.3z" fill="#484848"/><path d="M49.5 54.5L45.5 58.5" stroke="#484848" stroke-width="1.600"/><path d="M44.3 59.7L48.3 59.7L44.3 55.7z" fill="#484848"/><path d="M52.5 54.5L56.5 58.5" stroke="#484848" stroke-width="1.600"/><path d="M57.7 59.7L53.7 59.7L57.7 55.7z" fill="#484848"/><rect x="67.0" y="44" width="1" height="18" fill="#c4c4c4"/><text x="81.300" y="57" font-family="Liberation Sans,sans-serif" font-size="12" fill="#484848">Police</text><path d="M124.3 52h6l-3 3z" fill="#484848"/><rect x="139.0" y="44" width="1" height="18" fill="#c4c4c4"/><text x="151.000" y="57" font-family="Liberation Sans,sans-serif" font-size="12" fill="#484848">Taille</text><path d="M187.7 52h6l-3 3z" fill="#484848"/><rect x="203.0" y="44" width="1" height="18" fill="#c4c4c4"/><rect x="213.8" y="49.800" width="8" height="5.600" rx="2.800" fill="none" stroke="#484848" stroke-width="1.500"/><rect x="218.2" y="49.800" width="8" height="5.600" rx="2.800" fill="none" stroke="#484848" stroke-width="1.500"/><rect x="216.5" y="51.900" width="7" height="1.400" fill="#484848"/><rect x="241.8" y="49.800" width="8" height="5.600" rx="2.800" fill="none" stroke="#c0c0c0" stroke-width="1.500"/><rect x="246.2" y="49.800" width="8" height="5.600" rx="2.800" fill="none" stroke="#c0c0c0" stroke-width="1.500"/><rect x="244.5" y="51.900" width="7" height="1.400" fill="#c0c0c0"/><path d="M250.500 55.500l4.500 4.500M255 55.500l-4.500 4.500" stroke="#c0c0c0" stroke-width="1.500" fill="none"/><rect x="269.600" y="47.600" width="12.800" height="10.800" fill="none" stroke="#484848" stroke-width="1.200"/><path d="M270.500 57.500l3.500-4 2 2 3.500-4.500 2.500 3.500v3z" fill="#484848"/><circle cx="273.200" cy="50.500" r="1.200" fill="#484848"/><rect x="296.600" y="46.600" width="14.800" height="12.800" fill="none" stroke="#484848" stroke-width="1.200"/><rect x="296.600" y="46.600" width="14.800" height="3" fill="#484848"/><path d="M296.600 54.400h14.800M301.600 49v10.400M306.500 49v10.400" stroke="#484848" stroke-width="1.200"/><text x="325" y="59.300" font-family="Liberation Serif,serif" font-size="18" font-weight="bold" fill="#484848">Ω</text><path d="M357.500 47h-2.500a1 1 0 0 0-1 1v9.500a1 1 0 0 0 1 1h2M363.500 47h2.500a1 1 0 0 1 1 1v2" fill="none" stroke="#484848" stroke-width="1.100"/><path d="M357.500 47.500c0-1.500 1-2.500 3-2.500s3 1 3 2.500z" fill="#484848"/><rect x="358.600" y="51.600" width="8.300" height="7.800" fill="none" stroke="#484848" stroke-width="1.100"/><path d="M360.300 53.300l1.100 4.200 1.300-3 1.300 3 1.100-4.200" fill="none" stroke="#484848" stroke-width="1"/><path d="M382 46.600h7.500l3.500 3.500v9.300h-11z" fill="none" stroke="#484848" stroke-width="1.200"/><path d="M386 52l-1.800 2 1.800 2M389 52l1.800 2-1.800 2" fill="none" stroke="#484848" stroke-width="1.200"/></svg></div></div>
<div class="lbl" style="width:639px;top:75px">activité parente :</div>
<div class="sel " style="left:645px;top:69px;width:282px;height:21px;"><i></i></div>
<div class="a" style="left:651px;top:67.5px;width:221px;height:21px;background:linear-gradient(90deg,#f1f1f1,#f3f3f3 85%,#fcfcfc);filter:blur(.7px)"></div>
<svg class="a" width="1000" height="170" style="left:0;top:0;filter:blur(2.1px);overflow:visible" fill="rgba(80,80,80,.44)"><rect x="654.0" y="76.0" width="3.4" height="8.5" rx="1"/><rect x="659.6" y="78.5" width="3.4" height="8.0" rx="1"/><rect x="665.2" y="76.0" width="3.4" height="8.5" rx="1"/><rect x="670.8" y="78.5" width="3.4" height="6.0" rx="1"/><rect x="676.4" y="76.0" width="3.4" height="8.5" rx="1"/><rect x="682.0" y="76.0" width="3.4" height="8.5" rx="1"/><rect x="687.6" y="78.5" width="3.4" height="8.0" rx="1"/><rect x="693.2" y="76.0" width="3.4" height="8.5" rx="1"/><rect x="698.8" y="78.5" width="3.4" height="6.0" rx="1"/><rect x="704.4" y="78.5" width="3.4" height="6.0" rx="1"/><rect x="715.7" y="78.5" width="3.4" height="6.0" rx="1"/><rect x="721.3" y="78.5" width="3.4" height="6.0" rx="1"/><rect x="726.9" y="76.0" width="3.4" height="8.5" rx="1"/><rect x="732.5" y="78.5" width="3.4" height="6.0" rx="1"/><rect x="738.1" y="76.0" width="3.4" height="8.5" rx="1"/><rect x="748.6" y="76.0" width="3.4" height="8.5" rx="1"/><rect x="754.2" y="76.0" width="3.4" height="8.5" rx="1"/><rect x="759.8" y="76.0" width="3.4" height="8.5" rx="1"/><rect x="765.4" y="78.5" width="3.4" height="6.0" rx="1"/><rect x="771.0" y="78.5" width="3.4" height="8.0" rx="1"/><rect x="776.6" y="78.5" width="3.4" height="6.0" rx="1"/><rect x="782.2" y="76.0" width="3.4" height="8.5" rx="1"/><rect x="787.8" y="76.0" width="3.4" height="8.5" rx="1"/><rect x="793.4" y="78.5" width="3.4" height="8.0" rx="1"/><rect x="799.0" y="76.0" width="3.4" height="8.5" rx="1"/><rect x="804.6" y="78.5" width="3.4" height="6.0" rx="1"/><rect x="817.4" y="78.5" width="3.4" height="6.0" rx="1"/><rect x="823.0" y="78.5" width="3.4" height="6.0" rx="1"/><rect x="828.6" y="76.0" width="3.4" height="8.5" rx="1"/><rect x="834.2" y="78.5" width="3.4" height="6.0" rx="1"/><rect x="839.8" y="78.5" width="3.4" height="6.0" rx="1"/><rect x="845.4" y="78.5" width="3.4" height="6.0" rx="1"/><rect x="851.0" y="78.5" width="3.4" height="8.0" rx="1"/></svg>
<div class="a" style="left:649px;top:74px;width:1px;height:10px;background:#333"></div>
<div class="a" style="left:937px;top:70px;width:18px;height:18px;"><svg width="18" height="18" viewBox="0 0 18 18" style="display:block;"><line x1="10.200" y1="10" x2="15" y2="14.500" stroke="#b87818" stroke-width="3.700" stroke-linecap="round"/><line x1="10.600" y1="10.400" x2="14.900" y2="14.400" stroke="#f8b838" stroke-width="2.200" stroke-linecap="round"/><circle cx="5.600" cy="5.500" r="4.700" fill="url(#lens)" stroke="#7478ac" stroke-width="1.100"/><ellipse cx="5.600" cy="8" rx="3" ry="1.500" fill="#fff" opacity="0.550"/></svg></div>
<div class="a" style="left:963px;top:71px;width:16px;height:16px;"><svg width="16" height="16" viewBox="0 0 16 16" style="display:block;"><ellipse cx="8" cy="14.700" rx="5" ry="0.700" fill="#888" opacity="0.350"/><path d="M0 4.300h5.400V1.300l6.900 6.600-6.900 6.500V11.500H0z" fill="url(#garrow)"/><rect x="12.200" y="1.100" width="2.500" height="13.300" rx="0.800" fill="#4a7cba"/></svg></div>
<div class="lbl" style="width:614px;top:98px">état</div>
<div class="a" style="left:624px;top:93px;width:21px;height:21px;background:#ffa500;border:1px solid #bbb;border-radius:50%"></div>
<div class="sel red" style="left:645px;top:92px;width:164px;height:21px;">enregistré<i></i></div>
<div class="a" style="left:817px;top:91px;width:157px;height:22px;border:1px solid #b5b5b5;border-radius:11px;background:linear-gradient(#fff,#f4f4f4 50%,#e2e2e2);color:#222;line-height:19px"><div style="position:absolute;left:5px;top:2px"><svg width="16" height="16" viewBox="0 0 16 16" style="display:block;"><path d="M1.200 5V2.200a1 1 0 0 1 1-1h11.600a1 1 0 0 1 1 1v11.600a1 1 0 0 1-1 1H2.200a1 1 0 0 1-1-1V11" fill="none" stroke="#4a4a4a" stroke-width="1.900" stroke-linecap="round"/><path d="M0.500 8h9.500M6.800 4.300l3.700 3.700-3.700 3.700" fill="none" stroke="#4a4a4a" stroke-width="1.800" stroke-linecap="round" stroke-linejoin="round"/></svg></div><span style="position:absolute;left:26px;top:0">qualifié</span></div>
<div class="lbl" style="width:614px;top:121px">responsable</div>
<div class="a" style="left:623px;top:116px;width:21px;height:21px;background:#e74c3c;border-radius:50%;color:#fff;font-weight:bold;font-size:13.5px;line-height:21px;text-align:center">A</div>
<div class="sel " style="left:645px;top:115px;width:137px;height:21px;">Aymeric Cossard<i></i></div>
<div class="a" style="left:792px;top:114px;width:132px;height:22px;border:1px solid #b5b5b5;border-radius:11px;background:linear-gradient(#fff,#f4f4f4 50%,#e2e2e2);color:#222;line-height:19px"><div style="position:absolute;left:5px;top:2px"><svg width="16" height="16" viewBox="0 0 16 16" style="display:block;"><path d="M1.200 5V2.200a1 1 0 0 1 1-1h11.600a1 1 0 0 1 1 1v11.600a1 1 0 0 1-1 1H2.200a1 1 0 0 1-1-1V11" fill="none" stroke="#4a4a4a" stroke-width="1.900" stroke-linecap="round"/><path d="M0.500 8h9.500M6.800 4.300l3.700 3.700-3.700 3.700" fill="none" stroke="#4a4a4a" stroke-width="1.800" stroke-linecap="round" stroke-linejoin="round"/></svg></div><span style="position:absolute;left:26px;top:0">assigner à moi</span></div>
<div class="a" style="left:937px;top:116px;width:18px;height:18px;"><svg width="18" height="18" viewBox="0 0 18 18" style="display:block;"><line x1="10.200" y1="10" x2="15" y2="14.500" stroke="#b87818" stroke-width="3.700" stroke-linecap="round"/><line x1="10.600" y1="10.400" x2="14.900" y2="14.400" stroke="#f8b838" stroke-width="2.200" stroke-linecap="round"/><circle cx="5.600" cy="5.500" r="4.700" fill="url(#lens)" stroke="#7478ac" stroke-width="1.100"/><ellipse cx="5.600" cy="8" rx="3" ry="1.500" fill="#fff" opacity="0.550"/></svg></div>
<div class="a" style="left:963px;top:117px;width:16px;height:16px;"><svg width="16" height="16" viewBox="0 0 16 16" style="display:block;"><ellipse cx="8" cy="14.700" rx="5" ry="0.700" fill="#888" opacity="0.350"/><path d="M0 4.300h5.400V1.300l6.900 6.600-6.900 6.500V11.500H0z" fill="url(#garrow)"/><rect x="12.200" y="1.100" width="2.500" height="13.300" rx="0.800" fill="#4a7cba"/></svg></div>
<div class="lbl" style="width:639px;top:144px">pris en charge :</div>
<div class="chk" style="left:645px;top:140px"></div>
<div class="inp " style="left:665px;top:139px;width:74px;height:20px;"></div>
<div class="lbl" style="width:639px;top:167px">fait :</div>
<div class="chk" style="left:645px;top:163px"></div>
<div class="inp " style="left:665px;top:162px;width:74px;height:20px;"></div>
<div class="lbl" style="width:639px;top:190px">clos :</div>
<div class="chk" style="left:645px;top:186px"></div>
<div class="inp " style="left:665px;top:185px;width:74px;height:20px;"></div>
<div class="chk" style="left:752px;top:186px"></div>
<div class="lbl" style="left:773px;top:187px;text-align:left">annulé</div>
<div class="lbl" style="left:498px;top:207px;text-align:left">résultat</div>
<div class="a" style="left:498px;top:219px;width:486px;height:257px;border:1px solid #d1d1d1;background:#fff"></div>
<div class="a" style="left:499px;top:220px;width:484px;height:75px;background:#f8f8f8;border-bottom:1px solid #d1d1d1"><div style="position:absolute;left:0;top:0;width:470px;height:72px"><svg width="470" height="72" viewBox="0 0 470 72" style="display:block;position:absolute;left:-1px;top:0"><text transform="translate(17.700,25.800) scale(0.880,1)" font-family="Liberation Sans,sans-serif" font-size="15.700" font-weight="bold" fill="#484848" stroke="#484848" stroke-width="0.350">B</text><text x="46.300" y="25.900" font-family="Liberation Serif,serif" font-size="16" font-weight="bold" font-style="italic" fill="#484848" stroke="#484848" stroke-width="0.350">I</text><text x="73.400" y="24.800" font-family="Liberation Sans,sans-serif" font-size="14" font-weight="bold" fill="#484848" stroke="#484848" stroke-width="0.250">U</text><rect x="72.5" y="26.00" width="11.5" height="1.2" fill="#484848"/><rect x="95.0" y="11" width="1" height="18" fill="#c4c4c4"/><text x="106" y="25" font-family="Liberation Sans,sans-serif" font-size="14.5" font-weight="bold" font-style="italic" fill="#484848">T</text><rect x="105" y="25.20" width="8" height="1.2" fill="#484848"/><path d="M113.5 22l4.500 4.500M118 22l-4.500 4.500" stroke="#484848" stroke-width="1.500" fill="none"/><rect x="128.0" y="11" width="1" height="18" fill="#c4c4c4"/><rect x="144.2" y="15" width="1.2" height="11.500" fill="#484848"/><rect x="146.7" y="14.95" width="5.5" height="1.1" fill="#484848"/><rect x="146.7" y="17.65" width="5.5" height="1.1" fill="#484848"/><rect x="146.7" y="20.35" width="5.5" height="1.1" fill="#484848"/><rect x="146.7" y="23.05" width="5.5" height="1.1" fill="#484848"/><rect x="146.7" y="25.75" width="5.5" height="1.1" fill="#484848"/><rect x="140.2" y="14.95" width="1.2" height="1.1" fill="#484848"/><rect x="142.2" y="14.95" width="1.2" height="1.1" fill="#484848"/><rect x="140.2" y="25.75" width="1.2" height="1.1" fill="#484848"/><rect x="142.2" y="25.75" width="1.2" height="1.1" fill="#484848"/><path d="M138.2 20.900h4.500M140.79999999999998 18.800l2.100 2.100-2.100 2.100" stroke="#484848" stroke-width="1.1" fill="none"/><rect x="172.2" y="15" width="1.2" height="11.500" fill="#c0c0c0"/><rect x="174.7" y="14.95" width="5.5" height="1.1" fill="#c0c0c0"/><rect x="174.7" y="17.65" width="5.5" height="1.1" fill="#c0c0c0"/><rect x="174.7" y="20.35" width="5.5" height="1.1" fill="#c0c0c0"/><rect x="174.7" y="23.05" width="5.5" height="1.1" fill="#c0c0c0"/><rect x="174.7" y="25.75" width="5.5" height="1.1" fill="#c0c0c0"/><rect x="168.2" y="14.95" width="1.2" height="1.1" fill="#c0c0c0"/><rect x="170.2" y="14.95" width="1.2" height="1.1" fill="#c0c0c0"/><rect x="168.2" y="25.75" width="1.2" height="1.1" fill="#c0c0c0"/><rect x="170.2" y="25.75" width="1.2" height="1.1" fill="#c0c0c0"/><path d="M166.7 20.900h4.500M168.79999999999998 18.800l-2.100 2.100 2.100 2.100" stroke="#c0c0c0" stroke-width="1.1" fill="none"/><rect x="189.0" y="11" width="1" height="18" fill="#c4c4c4"/><rect x="199.8" y="15.20" width="9" height="1.8" fill="#484848"/><rect x="199.8" y="19.70" width="12" height="1.8" fill="#484848"/><rect x="199.8" y="24.10" width="12" height="1.8" fill="#484848"/><rect x="199.8" y="17.75" width="7" height="1.2" fill="#484848"/><rect x="199.8" y="22.20" width="9" height="1.2" fill="#484848"/><rect x="227.8" y="15.20" width="12" height="1.8" fill="#484848"/><rect x="229.8" y="19.70" width="8" height="1.8" fill="#484848"/><rect x="227.8" y="24.10" width="12" height="1.8" fill="#484848"/><rect x="230.8" y="17.75" width="6" height="1.2" fill="#484848"/><rect x="229.8" y="22.20" width="8" height="1.2" fill="#484848"/><rect x="256" y="15.20" width="12" height="1.8" fill="#484848"/><rect x="259" y="19.70" width="9" height="1.8" fill="#484848"/><rect x="256" y="24.10" width="12" height="1.8" fill="#484848"/><rect x="261" y="17.75" width="7" height="1.2" fill="#484848"/><rect x="259" y="22.20" width="9" height="1.2" fill="#484848"/><rect x="284" y="15.45" width="12" height="1.7" fill="#484848"/><rect x="284" y="18.35" width="12" height="1.7" fill="#484848"/><rect x="284" y="21.25" width="12" height="1.7" fill="#484848"/><rect x="284" y="24.15" width="12" height="1.7" fill="#484848"/><rect x="306.0" y="11" width="1" height="18" fill="#c4c4c4"/><text x="316.5" y="19.5" font-family="Liberation Sans,sans-serif" font-size="6.5" font-weight="bold" fill="#484848">1</text><text x="316.5" y="27" font-family="Liberation Sans,sans-serif" font-size="6.5" font-weight="bold" fill="#484848">2</text><rect x="322.5" y="15.45" width="7" height="1.1" fill="#484848"/><rect x="322.5" y="18.05" width="7" height="1.1" fill="#484848"/><rect x="322.5" y="21.95" width="7" height="1.1" fill="#484848"/><rect x="322.5" y="24.55" width="7" height="1.1" fill="#484848"/><circle cx="346.8" cy="17.2" r="1.9" fill="#484848"/><circle cx="346.8" cy="24" r="1.9" fill="#484848"/><rect x="351" y="15.45" width="7" height="1.1" fill="#484848"/><rect x="351" y="18.05" width="7" height="1.1" fill="#484848"/><rect x="351" y="22.25" width="7" height="1.1" fill="#484848"/><rect x="351" y="24.85" width="7" height="1.1" fill="#484848"/><rect x="367.0" y="11" width="1" height="18" fill="#c4c4c4"/><text x="377.600" y="24.500" font-family="Liberation Sans,sans-serif" font-size="13.500" font-weight="bold" fill="#484848" stroke="#484848" stroke-width="0.300">A</text><rect x="376" y="25.85" width="14.5" height="1.5" fill="#a0a0a0"/><path d="M394.7 19.5h6l-3 3z" fill="#484848"/><rect x="411" y="13" width="14" height="13.800" rx="2.200" fill="#484848"/><text x="413.2" y="24.800" font-family="Liberation Sans,sans-serif" font-size="13" font-weight="bold" fill="#fff">A</text><path d="M429.3 19.5h6l-3 3z" fill="#484848"/><rect x="442.5" y="11" width="1" height="18" fill="#c4c4c4"/><rect x="18.500" y="47.500" width="9" height="2" fill="#484848"/><path d="M16 51.500h14v6h-2v-3h-10v3h-2z" fill="#484848"/><rect x="19.200" y="55.700" width="7.600" height="3.300" fill="none" stroke="#484848" stroke-width="1.200"/><path d="M49.5 51.5L45.5 47.5" stroke="#484848" stroke-width="1.600"/><path d="M44.3 46.3L48.3 46.3L44.3 50.3z" fill="#484848"/><path d="M52.5 51.5L56.5 47.5" stroke="#484848" stroke-width="1.600"/><path d="M57.7 46.3L53.7 46.3L57.7 50.3z" fill="#484848"/><path d="M49.5 54.5L45.5 58.5" stroke="#484848" stroke-width="1.600"/><path d="M44.3 59.7L48.3 59.7L44.3 55.7z" fill="#484848"/><path d="M52.5 54.5L56.5 58.5" stroke="#484848" stroke-width="1.600"/><path d="M57.7 59.7L53.7 59.7L57.7 55.7z" fill="#484848"/><rect x="67.0" y="44" width="1" height="18" fill="#c4c4c4"/><text x="81.300" y="57" font-family="Liberation Sans,sans-serif" font-size="12" fill="#484848">Police</text><path d="M124.3 52h6l-3 3z" fill="#484848"/><rect x="139.0" y="44" width="1" height="18" fill="#c4c4c4"/><text x="151.000" y="57" font-family="Liberation Sans,sans-serif" font-size="12" fill="#484848">Taille</text><path d="M187.7 52h6l-3 3z" fill="#484848"/><rect x="203.0" y="44" width="1" height="18" fill="#c4c4c4"/><rect x="213.8" y="49.800" width="8" height="5.600" rx="2.800" fill="none" stroke="#484848" stroke-width="1.500"/><rect x="218.2" y="49.800" width="8" height="5.600" rx="2.800" fill="none" stroke="#484848" stroke-width="1.500"/><rect x="216.5" y="51.900" width="7" height="1.400" fill="#484848"/><rect x="241.8" y="49.800" width="8" height="5.600" rx="2.800" fill="none" stroke="#c0c0c0" stroke-width="1.500"/><rect x="246.2" y="49.800" width="8" height="5.600" rx="2.800" fill="none" stroke="#c0c0c0" stroke-width="1.500"/><rect x="244.5" y="51.900" width="7" height="1.400" fill="#c0c0c0"/><path d="M250.500 55.500l4.500 4.500M255 55.500l-4.500 4.500" stroke="#c0c0c0" stroke-width="1.500" fill="none"/><rect x="269.600" y="47.600" width="12.800" height="10.800" fill="none" stroke="#484848" stroke-width="1.200"/><path d="M270.500 57.500l3.500-4 2 2 3.500-4.500 2.500 3.500v3z" fill="#484848"/><circle cx="273.200" cy="50.500" r="1.200" fill="#484848"/><rect x="296.600" y="46.600" width="14.800" height="12.800" fill="none" stroke="#484848" stroke-width="1.200"/><rect x="296.600" y="46.600" width="14.800" height="3" fill="#484848"/><path d="M296.600 54.400h14.800M301.600 49v10.400M306.500 49v10.400" stroke="#484848" stroke-width="1.200"/><text x="325" y="59.300" font-family="Liberation Serif,serif" font-size="18" font-weight="bold" fill="#484848">Ω</text><path d="M357.500 47h-2.500a1 1 0 0 0-1 1v9.500a1 1 0 0 0 1 1h2M363.500 47h2.500a1 1 0 0 1 1 1v2" fill="none" stroke="#484848" stroke-width="1.100"/><path d="M357.500 47.500c0-1.500 1-2.500 3-2.500s3 1 3 2.500z" fill="#484848"/><rect x="358.600" y="51.600" width="8.300" height="7.800" fill="none" stroke="#484848" stroke-width="1.100"/><path d="M360.300 53.300l1.100 4.200 1.300-3 1.300 3 1.100-4.200" fill="none" stroke="#484848" stroke-width="1"/><path d="M382 46.600h7.500l3.500 3.500v9.300h-11z" fill="none" stroke="#484848" stroke-width="1.200"/><path d="M386 52l-1.800 2 1.800 2M389 52l1.800 2-1.800 2" fill="none" stroke="#484848" stroke-width="1.200"/></svg></div></div>
<div class="a" style="left:498px;top:475px;width:486px;height:20px;border:1px solid #d1d1d1;background:#f8f8f8"></div>
<div class="a" style="left:988px;top:68px;width:486px;height:51px;border:1px solid #a9a9a9;background:#fff"></div>
<div class="a" style="left:989px;top:69px;width:484px;height:21px;background:linear-gradient(#fff,#f2f2f2 50%,#e4e4e4);border-bottom:1px solid #a9a9a9"></div>
<div class="a" style="left:1060px;top:69px;width:1px;height:49px;background:#a9a9a9"></div>
<div class="a" style="left:1196px;top:69px;width:1px;height:49px;background:#a9a9a9"></div>
<div class="a" style="left:1265px;top:69px;width:1px;height:49px;background:#a9a9a9"></div>
<div class="a" style="left:1335px;top:69px;width:1px;height:49px;background:#a9a9a9"></div>
<div class="a" style="left:1404px;top:69px;width:1px;height:49px;background:#a9a9a9"></div>
<div class="a" style="left:1061px;top:73px;width:135px;height:14px;text-align:center;color:#555;line-height:14px;font-size:8pt">ressource</div>
<div class="a" style="left:1197px;top:73px;width:68px;height:14px;text-align:center;color:#555;line-height:14px;font-size:8pt">taux</div>
<div class="a" style="left:1266px;top:73px;width:69px;height:14px;text-align:center;color:#555;line-height:14px;font-size:8pt">assigné (j)</div>
<div class="a" style="left:1336px;top:73px;width:68px;height:14px;text-align:center;color:#555;line-height:14px;font-size:8pt">réel (j)</div>
<div class="a" style="left:1405px;top:73px;width:69px;height:14px;text-align:center;color:#555;line-height:14px;font-size:8pt">reste (j)</div>
<div class="a" style="left:1017px;top:71px;width:16px;height:16px;"><svg width="16" height="16" viewBox="0 0 16 16" style="display:block;"><path d="M5.400 0.700h5.200v4.700h4.700v5.200h-4.700v4.700H5.400v-4.700H0.700V5.400h4.700z" fill="url(#gplus)" stroke="#1f8a0c" stroke-width="1" stroke-linejoin="round"/><path d="M6.500 1.800h3v4.700h4.700" fill="none" stroke="#a8ec80" stroke-width="0.900" opacity="0.750"/><path d="M1.800 9.300V6.500h4.700V1.800" fill="none" stroke="#a8ec80" stroke-width="0.900" opacity="0.600"/></svg></div>
<div class="a" style="left:995px;top:96px;width:16px;height:16px;"><svg width="16" height="16" viewBox="0 0 16 16" style="display:block;"><ellipse cx="6" cy="15.300" rx="5" ry="0.700" fill="#777" opacity="0.400"/><g transform="translate(0.600,15) rotate(-45)"><path d="M0 0L4.800 -2.600H17.200a2.600 2.600 0 0 1 0 5.200H4.800z" fill="url(#gpen2)" stroke="#c07a14" stroke-width="0.700" stroke-linejoin="round"/><path d="M0 0L4.800 -2.600V2.600z" fill="#f2dcb0" stroke="#b08040" stroke-width="0.500"/><path d="M0 0L1.800 -1V1z" fill="#3a3028"/><path d="M16 -2.600h1.200a2.600 2.600 0 0 1 0 5.200H16z" fill="#e8392c"/><path d="M14.800 -2.600h1.200v5.200h-1.200z" fill="#d8d8d8" opacity="0.700"/></g></svg></div>
<div class="a" style="left:1017px;top:96px;width:16px;height:16px;"><svg width="16" height="16" viewBox="0 0 16 16" style="display:block;"><path d="M3.2 0.6L8 5.0l4.800-4.400 2.800 2.800L11 8l4.600 4.600-2.800 2.800L8 11l-4.800 4.400-2.800-2.800L5 8 0.400 3.400z" fill="url(#gred)" stroke="#c81818" stroke-width="0.5" stroke-linejoin="round"/></svg></div>
<div class="a" style="left:1038px;top:96px;width:16px;height:16px;"><svg width="16" height="16" viewBox="0 0 16 16" style="display:block;"><ellipse cx="9" cy="14.300" rx="5.500" ry="0.800" fill="#999" opacity="0.450"/><path d="M12 3.300L2.200 7.600L12 11.700" fill="none" stroke="#2f86e0" stroke-width="2.600" stroke-linejoin="round"/><path d="M12 3.300L2.200 7.600L12 11.700" fill="none" stroke="#6ab8fa" stroke-width="1" stroke-linejoin="round"/><path d="M10 0.400l5.600 2.400-4.400 3.600z M10.400 8.900l5.200 3-5.600 2.300z" fill="#3a96f0" stroke="#1f70d0" stroke-width="0.500" stroke-linejoin="round"/></svg></div>
<div class="a" style="left:1066px;top:93px;width:130px;height:24px;font-size:9.9px;line-height:12px;white-space:normal;color:#222">Jordan HOAREAU (Chef<br>de projet)</div>
<div class="a" style="left:1197px;top:98px;width:68px;height:14px;text-align:center;font-size:9.9px;line-height:14px;color:#222">100 %</div>
<div class="inp r" style="left:1271px;top:93px;width:60px;height:22px;font-size:9.9px;padding-top:4px">4</div>
<div class="a" style="left:1336px;top:98px;width:63px;height:14px;text-align:right;font-size:9.9px;line-height:14px;color:#222">0.00</div>
<div class="inp r" style="left:1410px;top:93px;width:58px;height:22px;font-size:9.9px;padding-top:4px">4</div>
<div class="a" style="left:1425px;top:44px;width:42px;height:14px;border:1px solid #fff;border-radius:8px;background:linear-gradient(#f6f6f6,#e6e6e6);box-shadow:1.5px 2px 2.5px rgba(0,0,0,.7);text-align:center;font-weight:bold;color:#545381;font-size:7pt;line-height:12px">1</div>
<div class="bar" style="left:988px;top:154px;width:486px">Dates et durées</div>
<div class="colh" style="left:1067px;top:177px">validé</div>
<div class="colh" style="left:1143px;top:177px">planifié</div>
<div class="colh" style="left:1219px;top:177px">réel</div>
<div class="colh" style="left:1370px;top:177px">demandé</div>
<div class="lbl" style="width:1061px;top:196px">date début :</div>
<div class="lbl" style="width:1061px;top:219px">date fin :</div>
<div class="lbl" style="width:1061px;top:242px">durée :</div>
<div class="inp " style="left:1067px;top:190px;width:74px;height:21px;"></div>
<div class="inp ro" style="left:1143px;top:190px;width:74px;height:21px;"></div>
<div class="inp ro" style="left:1219px;top:190px;width:75px;height:21px;"></div>
<div class="inp " style="left:1370px;top:190px;width:75px;height:21px;"></div>
<div class="inp " style="left:1067px;top:213px;width:74px;height:21px;"></div>
<div class="inp ro" style="left:1143px;top:213px;width:74px;height:21px;"></div>
<div class="inp ro" style="left:1219px;top:213px;width:75px;height:21px;"></div>
<div class="inp " style="left:1370px;top:213px;width:75px;height:21px;"></div>
<div class="inp " style="left:1067px;top:237px;width:62px;height:19px;"></div>
<div class="txt" style="left:1130px;top:242px;color:#000">j</div>
<div class="inp ro" style="left:1143px;top:237px;width:62px;height:19px;"></div>
<div class="txt" style="left:1206px;top:242px;color:#000">j</div>
<div class="inp ro" style="left:1219px;top:237px;width:62px;height:19px;"></div>
<div class="txt" style="left:1282px;top:242px;color:#000">j</div>
<div class="inp " style="left:1370px;top:237px;width:62px;height:19px;"></div>
<div class="txt" style="left:1433px;top:242px;color:#000">j</div>
<div class="bar" style="left:988px;top:262px;width:486px">Charges et coûts</div>
<div class="colh" style="left:1067px;top:285px">validé</div>
<div class="colh" style="left:1148px;top:285px">assigné</div>
<div class="colh" style="left:1229px;top:285px">réel</div>
<div class="colh" style="left:1310px;top:285px">reste</div>
<div class="colh" style="left:1391px;top:285px">réévalué</div>
<div class="lbl" style="width:1061px;top:304px">charge :</div>
<div class="lbl" style="width:1061px;top:327px">coût :</div>
<div class="inp  r" style="left:1067px;top:299px;width:62px;height:19px;">4</div>
<div class="txt" style="left:1130px;top:304px;color:#000">j</div>
<div class="inp " style="left:1067px;top:322px;width:68px;height:19px;"></div>
<div class="txt" style="left:1136px;top:327px;color:#000">€</div>
<div class="inp ro r" style="left:1148px;top:299px;width:62px;height:19px;">4</div>
<div class="txt" style="left:1211px;top:304px;color:#000">j</div>
<div class="inp ro" style="left:1148px;top:322px;width:68px;height:19px;"></div>
<div class="txt" style="left:1217px;top:327px;color:#000">€</div>
<div class="inp ro r" style="left:1229px;top:299px;width:62px;height:19px;">0</div>
<div class="txt" style="left:1292px;top:304px;color:#000">j</div>
<div class="inp ro" style="left:1229px;top:322px;width:68px;height:19px;"></div>
<div class="txt" style="left:1298px;top:327px;color:#000">€</div>
<div class="inp ro r" style="left:1310px;top:299px;width:62px;height:19px;">4</div>
<div class="txt" style="left:1373px;top:304px;color:#000">j</div>
<div class="inp ro" style="left:1310px;top:322px;width:68px;height:19px;"></div>
<div class="txt" style="left:1379px;top:327px;color:#000">€</div>
<div class="inp ro r" style="left:1391px;top:299px;width:62px;height:19px;">4</div>
<div class="txt" style="left:1454px;top:304px;color:#000">j</div>
<div class="inp ro" style="left:1391px;top:322px;width:68px;height:19px;"></div>
<div class="txt" style="left:1460px;top:327px;color:#000">€</div>
<div class="bar" style="left:988px;top:347px;width:486px">Pilotage</div>
<div class="lbl" style="width:1062px;top:376px">avancement :</div>
<div class="txt" style="left:1068px;top:376px;color:#222">0 %</div>
<div class="lbl" style="width:1212px;top:376px">attendu :</div>
<div class="txt" style="left:1220px;top:376px;color:#222">0 %</div>
<div class="lbl" style="width:1362.5px;top:376px">wbs :</div>
<div class="txt" style="left:1370.5px;top:376px;color:#222">5.11.1.2</div>
<div class="lbl" style="width:1062px;top:399px">priorité :</div>
<div class="inp r" style="left:1067px;top:395px;width:46px;height:19px;">500</div>
<div class="lbl" style="width:1212px;top:399px">planning :</div>
<div class="sel red" style="left:1218px;top:394px;width:201px;height:21px;">dès que possible<i></i></div>
<div class="lbl" style="width:1129px;top:460px">produit :</div>
<div class="sel " style="left:1135px;top:454px;width:282px;height:21px;"><i></i></div>
<div class="a" style="left:1426px;top:456px;width:18px;height:18px;"><svg width="18" height="18" viewBox="0 0 18 18" style="display:block;"><line x1="10.200" y1="10" x2="15" y2="14.500" stroke="#b87818" stroke-width="3.700" stroke-linecap="round"/><line x1="10.600" y1="10.400" x2="14.900" y2="14.400" stroke="#f8b838" stroke-width="2.200" stroke-linecap="round"/><circle cx="5.600" cy="5.500" r="4.700" fill="url(#lens)" stroke="#7478ac" stroke-width="1.100"/><ellipse cx="5.600" cy="8" rx="3" ry="1.500" fill="#fff" opacity="0.550"/></svg></div>
<div class="a" style="left:1453px;top:457px;width:16px;height:16px;"><svg width="16" height="16" viewBox="0 0 16 16" style="display:block;"><ellipse cx="8" cy="14.700" rx="5" ry="0.700" fill="#888" opacity="0.350"/><path d="M0 4.300h5.400V1.300l6.900 6.600-6.900 6.500V11.500H0z" fill="url(#garrow)"/><rect x="12.200" y="1.100" width="2.500" height="13.300" rx="0.800" fill="#4a7cba"/></svg></div>
<div class="lbl" style="width:1129px;top:483px">composant :</div>
<div class="sel " style="left:1135px;top:477px;width:282px;height:21px;"><i></i></div>
<div class="a" style="left:1426px;top:478px;width:18px;height:18px;"><svg width="18" height="18" viewBox="0 0 18 18" style="display:block;"><line x1="10.200" y1="10" x2="15" y2="14.500" stroke="#b87818" stroke-width="3.700" stroke-linecap="round"/><line x1="10.600" y1="10.400" x2="14.900" y2="14.400" stroke="#f8b838" stroke-width="2.200" stroke-linecap="round"/><circle cx="5.600" cy="5.500" r="4.700" fill="url(#lens)" stroke="#7478ac" stroke-width="1.100"/><ellipse cx="5.600" cy="8" rx="3" ry="1.500" fill="#fff" opacity="0.550"/></svg></div>
<div class="a" style="left:1453px;top:479px;width:16px;height:16px;"><svg width="16" height="16" viewBox="0 0 16 16" style="display:block;"><ellipse cx="8" cy="14.700" rx="5" ry="0.700" fill="#888" opacity="0.350"/><path d="M0 4.300h5.400V1.300l6.900 6.600-6.900 6.500V11.500H0z" fill="url(#garrow)"/><rect x="12.200" y="1.100" width="2.500" height="13.300" rx="0.800" fill="#4a7cba"/></svg></div>
<div class="a" style="left:1486.5px;top:35px;width:16.5px;height:454px;background:#f1f1f1"></div>
<div class="a" style="left:1488px;top:53px;width:13px;height:275px;background:#c1c1c1"></div>
<div class="a" style="left:1491px;top:43px;width:7px;height:4px;"><svg width="7" height="4" style="display:block"><path d="M0 4l3.500-4 3.500 4z" fill="#a3a3a3"/></svg></div>
<div class="a" style="left:1491px;top:478px;width:7px;height:4px;"><svg width="7" height="4" style="display:block"><path d="M0 0l3.500 4 3.500-4z" fill="#505050"/></svg></div>
<div class="a" style="left:1503px;top:0px;width:2px;height:489px;background:linear-gradient(90deg,#5c5c5c 50%,#e4e4e4 50%)"></div>
<div class="a" style="left:1504px;top:64px;width:1px;height:20px;background:repeating-linear-gradient(#666 0 2px,#fff 2px 4px)"></div>
<div class="a" style="left:0px;top:467.8px;width:19px;height:4.9px;background:#4a7e86"></div>
<div class="a" style="left:0px;top:475.1px;width:19px;height:4.9px;background:#4a7e86"></div>
<div class="a" style="left:0px;top:482px;width:19px;height:5.6px;background:#4a7e86"></div>
<div class="a" style="left:1485px;top:466.8px;width:18px;height:4.8px;background:#4a7e86"></div>
<div class="a" style="left:1485px;top:474px;width:18px;height:4.8px;background:#4a7e86"></div>
<div class="a" style="left:1485px;top:481.3px;width:18px;height:4.8px;background:#4a7e86"></div>
</div>
</body></html>
